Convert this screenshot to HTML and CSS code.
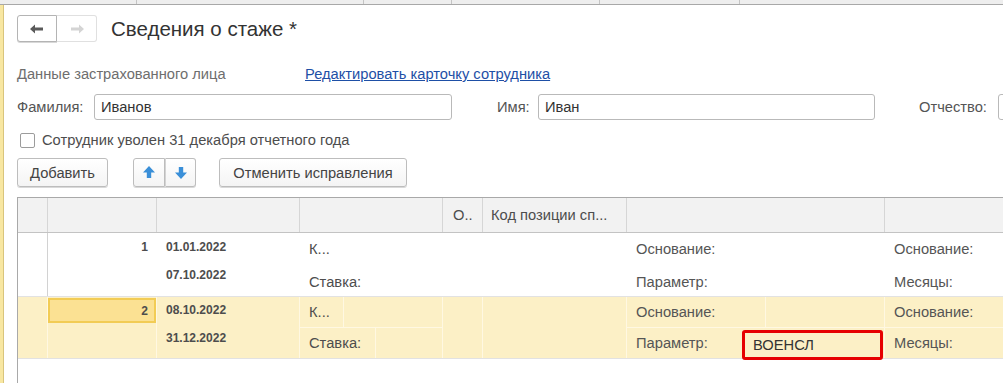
FILE: index.html
```html
<!DOCTYPE html>
<html lang="ru">
<head>
<meta charset="utf-8">
<title>Сведения о стаже</title>
<link rel="stylesheet" href="styles.css">
</head>
<body>
<div class="topstrip">
  <span class="seg s1"></span><span class="seg s2"></span><span class="seg s3"></span><span class="seg s4"></span><span class="seg s5"></span><span class="seg s6"></span>
</div>
<div class="frame">
  <div class="accent"></div>
  <div class="content">
    <div class="head">
      <div class="navgroup">
        <button class="nav back"><svg width="14" height="10" viewBox="0 0 14 10"><path d="M0 5 L5 0.5 L5 3.5 L13 3.5 L13 6.5 L5 6.5 L5 9.5 Z" fill="#5a5a5a"/></svg></button>
        <button class="nav fwd"><svg width="14" height="10" viewBox="0 0 14 10"><path d="M14 5 L9 0.5 L9 3.5 L1 3.5 L1 6.5 L9 6.5 L9 9.5 Z" fill="#d4d4d4"/></svg></button>
      </div>
      <h1 class="title">Сведения о стаже *</h1>
    </div>

    <div class="section">
      <span class="section-label">Данные застрахованного лица</span>
      <a class="link" href="#">Редактировать карточку сотрудника</a>
    </div>

    <div class="fields">
      <div class="field f-last"><span class="flabel">Фамилия:</span><div class="input">Иванов</div></div>
      <div class="field f-first"><span class="flabel">Имя:</span><div class="input">Иван</div></div>
      <div class="field f-mid"><span class="flabel">Отчество:</span><div class="input"></div></div>
    </div>

    <div class="check">
      <span class="box"></span>
      <span class="check-text">Сотрудник уволен 31 декабря отчетного года</span>
    </div>

    <div class="toolbar">
      <button class="btn btn-add">Добавить</button>
      <div class="btngroup">
        <button class="btn btn-icon"><svg width="12" height="13" viewBox="0 0 12 13"><path d="M6 0 L12 6.5 L8.2 6.5 L8.2 12 L3.8 12 L3.8 6.5 L0 6.5 Z" fill="#3a8fd8"/></svg></button>
        <button class="btn btn-icon"><svg width="12" height="13" viewBox="0 0 12 13"><path d="M6 13 L12 6.5 L8.2 6.5 L8.2 1 L3.8 1 L3.8 6.5 L0 6.5 Z" fill="#3a8fd8"/></svg></button>
      </div>
      <button class="btn btn-cancel">Отменить исправления</button>
    </div>

    <div class="table">
      <div class="thead">
        <div class="th"></div>
        <div class="th"></div>
        <div class="th"></div>
        <div class="th"></div>
        <div class="th">О..</div>
        <div class="th">Код позиции сп...</div>
        <div class="th"></div>
        <div class="th last"></div>
      </div>

      <div class="row">
        <div class="c ca"></div>
        <div class="c cb"><div class="num">1</div></div>
        <div class="c cc"><div class="date">01.01.2022</div><div class="date">07.10.2022</div></div>
        <div class="c cd">
          <div class="sub top"><span class="lbl w44">К...</span><span class="fill"></span></div>
          <div class="sub"><span class="lbl w76">Ставка:</span><span class="fill"></span></div>
        </div>
        <div class="c ce"></div>
        <div class="c cf"></div>
        <div class="c cg">
          <div class="sub top"><span class="lbl w139">Основание:</span><span class="fill"></span></div>
          <div class="sub"><span class="lbl w115">Параметр:</span><span class="fill"></span></div>
        </div>
        <div class="c ch">
          <div class="sub top"><span class="lbl">Основание:</span></div>
          <div class="sub"><span class="lbl">Месяцы:</span></div>
        </div>
      </div>

      <div class="row active">
        <div class="c ca"></div>
        <div class="c cb"><div class="num selected">2</div></div>
        <div class="c cc"><div class="date">08.10.2022</div><div class="date">31.12.2022</div></div>
        <div class="c cd">
          <div class="sub top"><span class="lbl w44">К...</span><span class="fill"></span></div>
          <div class="sub"><span class="lbl w76">Ставка:</span><span class="fill"></span></div>
        </div>
        <div class="c ce"></div>
        <div class="c cf"></div>
        <div class="c cg">
          <div class="sub top"><span class="lbl w139">Основание:</span><span class="fill"></span></div>
          <div class="sub"><span class="lbl w115">Параметр:</span><span class="fill mark"><span class="marked">ВОЕНСЛ</span></span></div>
        </div>
        <div class="c ch">
          <div class="sub top"><span class="lbl">Основание:</span></div>
          <div class="sub"><span class="lbl">Месяцы:</span></div>
        </div>
      </div>
      <div class="empty"></div>
    </div>
  </div>
</div>
</body>
</html>
```

FILE: styles.css
```css
* { box-sizing: border-box; }
html, body { margin: 0; padding: 0; }
body {
  width: 1003px;
  height: 383px;
  overflow: hidden;
  background: #fff;
  font-family: "Liberation Sans", Arial, sans-serif;
  font-size: 14.7px;
  color: #4d4d4d;
}

.topstrip {
  display: flex;
  height: 5px;
  background: #eeeeee;
  border-bottom: 1px solid #a8a8a8;
}
.seg { border-right: 1px solid #c4c4c4; height: 100%; }
.s1 { width: 137px; }
.s2 { width: 227px; }
.s3 { width: 88px; }
.s4 { width: 148px; }
.s5 { width: 140px; }
.s6 { flex: 1; border-right: 0; }

.frame { display: flex; height: 378px; }
.accent {
  width: 4px;
  flex: none;
  background: #f8e7a2;
  border-right: 1px solid #d9c57c;
}
.content {
  flex: 1;
  min-width: 0;
  padding-left: 13px;
  display: flex;
  flex-direction: column;
}

/* header */
.head { display: flex; align-items: center; padding-top: 10px; height: 37px; flex: none; }
.navgroup { display: flex; }
.nav {
  width: 40px;
  height: 27px;
  border: 1px solid #c6c6c6;
  background: #fff;
  padding: 0;
  display: flex;
  align-items: center;
  justify-content: center;
}
.nav.back { border-radius: 3px 0 0 3px; border-color: #b4b4b4; box-shadow: 0 1px 0 #d8d8d8; }
.nav.fwd { border-left: 0; border-radius: 0 3px 3px 0; border-color: #e0e0e0; }
.title {
  margin: 0 0 0 14px;
  font-size: 20.5px;
  font-weight: normal;
  color: #333;
  line-height: 27px;
}

/* section */
.section { display: flex; align-items: center; height: 18px; margin-top: 23px; flex: none; }
.section-label { width: 288px; color: #6e6e6e; }
.link { color: #1e4fa6; text-decoration: underline; }

/* fields */
.fields { display: flex; margin-top: 11px; height: 26px; flex: none; }
.field { display: flex; align-items: center; flex: none; }
.flabel { color: #555; white-space: nowrap; }
.input {
  height: 26px;
  border: 1px solid #b9b9b9;
  border-radius: 3px;
  background: #fff;
  padding-left: 6px;
  line-height: 24px;
  color: #333;
}
.f-last .flabel { width: 77px; }
.f-last .input { width: 358px; }
.f-first { margin-left: 45px; }
.f-first .flabel { width: 41px; }
.f-first .input { width: 337px; }
.f-mid { margin-left: 44px; }
.f-mid .flabel { width: 79px; }
.f-mid .input { width: 40px; }

/* checkbox */
.check { display: flex; align-items: center; margin-top: 11px; height: 18px; flex: none; }
.box {
  width: 15px;
  height: 15px;
  margin-left: 3px;
  border: 1px solid #9c9c9c;
  border-radius: 2px;
  background: #fff;
}
.check-text { margin-left: 7px; color: #4d4d4d; }

/* toolbar */
.toolbar { display: flex; margin-top: 9px; height: 29px; flex: none; }
.btn {
  height: 29px;
  border: 1px solid #bdbdbd;
  border-radius: 3px;
  background: linear-gradient(#ffffff, #f4f4f4);
  box-shadow: 0 1px 0 #d9d9d9;
  font-family: inherit;
  font-size: 14.7px;
  color: #444;
  padding: 0;
}
.btn-add { width: 91px; }
.btngroup { display: flex; margin-left: 25px; }
.btn-icon { width: 32px; display: flex; align-items: center; justify-content: center; }
.btngroup .btn-icon:first-child { border-radius: 3px 0 0 3px; }
.btngroup .btn-icon:last-child { width: 31px; border-radius: 0 3px 3px 0; border-left: 1px solid #d4d4d4; }
.btn-cancel { width: 188px; margin-left: 23px; }

/* table */
.table {
  margin-top: 10px;
  flex: 1;
  border-top: 1px solid #a9a9a9;
  border-left: 1px solid #a9a9a9;
  display: flex;
  flex-direction: column;
}
.thead, .row {
  display: grid;
  grid-template-columns: 30px 109px 143px 143px 40px 144px 258px 140px;
  flex: none;
}
.thead {
  height: 35px;
  background: #f2f2f2;
  border-bottom: 1px solid #c3c3c3;
}
.th {
  border-right: 1px solid #d6d6d6;
  display: flex;
  align-items: center;
  padding-left: 8px;
  color: #4d4d4d;
  white-space: nowrap;
  overflow: hidden;
}
.th:nth-child(5) { padding-left: 10px; }
.th.last { border-right: 0; }

.row { height: 64px; border-bottom: 1px solid #e2e2e2; }
.row.active { height: 62px; background: #fcf0c6; }
.c { border-right: 1px solid #ffffff; }
.ca { border-right-color: #d2d2d2; }
.row.active .c { border-right-color: #fff8e2; }
.ch { border-right: 0; }

.cb { padding-top: 1px; }
.num {
  height: 26px;
  line-height: 26px;
  text-align: right;
  padding-right: 8px;
  font-weight: bold;
  font-size: 12px;
  color: #4d4d4d;
}
.num.selected {
  height: 25px;
  line-height: 23px;
  background: #fbe193;
  border: 2px solid #f2cc55;
  padding-right: 6px;
}

.cc { padding-left: 9px; display: flex; flex-direction: column; }
.date {
  height: 29px;
  line-height: 29px;
  font-weight: bold;
  font-size: 12px;
  color: #4d4d4d;
}
.row:not(.active) .date:first-child { height: 28px; line-height: 28px; }
.row.active .date:first-child { height: 27px; line-height: 27px; }

.cd, .cg, .ch { display: flex; flex-direction: column; }
.sub { display: flex; flex: 1; }
.sub.top { flex: none; height: 32px; border-bottom: 1px solid #ffffff; }
.row.active .sub.top { height: 31px; border-bottom-color: #fff8e2; }
.lbl {
  display: flex;
  align-items: center;
  padding-left: 9px;
  white-space: nowrap;
  color: #4d4d4d;
}
.cg .lbl, .ch .lbl { color: #555; }
.row:not(.active) .sub:not(.top) .lbl { padding-top: 2px; }
.w44 { width: 44px; border-right: 1px solid #fff; }
.w76 { width: 76px; border-right: 1px solid #fff; }
.w139 { width: 139px; border-right: 1px solid #fff; }
.w115 { width: 115px; }
.row.active .w44, .row.active .w76, .row.active .w139 { border-right-color: #fff8e2; }
.fill { flex: 1; }
.mark { position: relative; }
.marked {
  position: absolute;
  left: 0;
  top: 2px;
  width: 141px;
  height: 30px;
  border: 3px solid #e60000;
  border-radius: 3px;
  padding-left: 8px;
  display: flex;
  align-items: center;
  color: #333;
}
.empty { flex: 1; }
```
